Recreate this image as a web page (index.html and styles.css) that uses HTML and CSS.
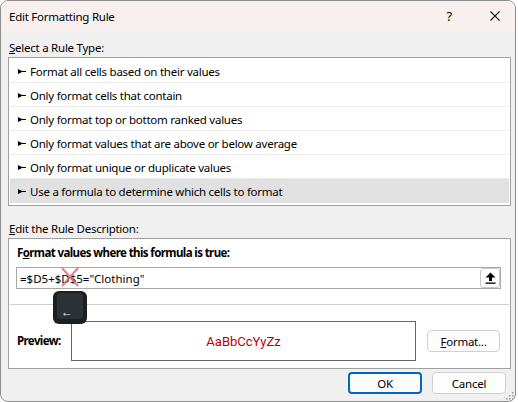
FILE: index.html
```html
<!DOCTYPE html>
<html lang="en">
<head>
    <meta charset="UTF-8">
    <title>Edit Formatting Rule</title>
    <link rel="stylesheet" href="styles.css">
</head>
<body>
    <div class="dialog">
        <div class="titlebar">
            <span class="title">Edit Formatting Rule</span>
            <span class="help">?</span>
            <svg class="close" width="10" height="10" viewBox="0 0 10 10"><path d="M0.5 0.5 L9.5 9.5 M9.5 0.5 L0.5 9.5" stroke="#1a1a1a" stroke-width="1.1" fill="none"/></svg>
        </div>

        <div class="content">
            <div class="label"><u>S</u>elect a Rule Type:</div>
            <ul class="rules">
                <li><svg class="marker" width="8" height="5" viewBox="0 0 8 5"><path d="M0 0 L4 2 L8 2 L8 3 L4 3 L0 5 Z" fill="#000"/></svg>Format all cells based on their values</li>
                <li><svg class="marker" width="8" height="5" viewBox="0 0 8 5"><path d="M0 0 L4 2 L8 2 L8 3 L4 3 L0 5 Z" fill="#000"/></svg>Only format cells that contain</li>
                <li><svg class="marker" width="8" height="5" viewBox="0 0 8 5"><path d="M0 0 L4 2 L8 2 L8 3 L4 3 L0 5 Z" fill="#000"/></svg>Only format top or bottom ranked values</li>
                <li><svg class="marker" width="8" height="5" viewBox="0 0 8 5"><path d="M0 0 L4 2 L8 2 L8 3 L4 3 L0 5 Z" fill="#000"/></svg>Only format values that are above or below average</li>
                <li><svg class="marker" width="8" height="5" viewBox="0 0 8 5"><path d="M0 0 L4 2 L8 2 L8 3 L4 3 L0 5 Z" fill="#000"/></svg>Only format unique or duplicate values</li>
                <li class="selected"><svg class="marker" width="8" height="5" viewBox="0 0 8 5"><path d="M0 0 L4 2 L8 2 L8 3 L4 3 L0 5 Z" fill="#000"/></svg>Use a formula to determine which cells to format</li>
            </ul>

            <div class="label desc-label"><u>E</u>dit the Rule Description:</div>
            <div class="desc">
                <div class="bold-label">F<u>o</u>rmat values where this formula is true:</div>
                <div class="formula">
                    <span class="formula-text">=$D5+$D$5="Clothing"</span>
                    <button class="collapse" type="button">
                        <svg width="11" height="12" viewBox="0 0 11 12"><path d="M5.5 0.5 L10.5 5.5 L7 5.5 L7 9 L4 9 L4 5.5 L0.5 5.5 Z" fill="#000"/><rect x="0.5" y="10.5" width="10" height="1.3" fill="#000"/></svg>
                    </button>
                </div>
                <div class="sep"></div>
                <div class="preview-row">
                    <span class="bold-label preview-label">Preview:</span>
                    <div class="preview">AaBbCcYyZz</div>
                    <button class="btn" type="button"><u>F</u>ormat...</button>
                </div>
            </div>
        </div>

        <div class="footer">
            <button class="btn primary" type="button">OK</button>
            <button class="btn" type="button">Cancel</button>
        </div>

        <!-- overlays -->
        <svg class="strike" width="20" height="22" viewBox="0 0 20 22"><path d="M2 2 L18 20 M18 2 L2 20" stroke="#e2677a" stroke-width="2" stroke-opacity="0.85" fill="none"/></svg>
        <div class="keycap"><div class="keycap-top"><span class="keycap-arrow">&#8592;</span></div></div>
        <svg class="grip" width="10" height="10" viewBox="0 0 10 10" fill="#9a9a9a"><rect x="7" y="1" width="1.5" height="1.5"/><rect x="4" y="4" width="1.5" height="1.5"/><rect x="7" y="4" width="1.5" height="1.5"/><rect x="1" y="7" width="1.5" height="1.5"/><rect x="4" y="7" width="1.5" height="1.5"/><rect x="7" y="7" width="1.5" height="1.5"/></svg>
    </div>
</body>
</html>
```

FILE: styles.css
```css
/* Cuadro de dialogo */
body {
    margin: 0;
    width: 518px;
    height: 402px;
    overflow: hidden;
    background: #ffffff;
    font-family: "Noto Sans", "Open Sans", sans-serif;
    font-size: 11.5px;
    letter-spacing: -0.25px;
    color: #000;
}

.dialog {
    position: relative;
    box-sizing: border-box;
    width: 516px;
    height: 402px;
    border: 1px solid #8e8e8e;
    border-radius: 8px;
    background: #f0f0f0;
    overflow: hidden;
}

.titlebar {
    display: flex;
    align-items: center;
    height: 30px;
    padding-left: 8px;
    background: #f7f0ef;
}

.title {
    flex: 1;
    padding-top: 1px;
}

.help {
    font-size: 13px;
    margin-right: 38px;
}

.close {
    margin-right: 15px;
}

.content {
    padding: 0 4px 0 7px;
}

.label {
    margin: 8px 0 1px 1px;
    line-height: 17px;
}

.desc-label {
    margin-top: 14px;
    margin-bottom: 1px;
}

.rules {
    list-style: none;
    margin: 0;
    padding: 1px 1px 2px;
    background: #fff;
    border: 1px solid #a0a0a0;
}

.rules li {
    display: flex;
    align-items: center;
    box-sizing: border-box;
    height: 24px;
    padding: 1px 0 0 8px;
    border-bottom: 1px solid #ececec;
}

.rules li.selected {
    background: #e1e1e1;
    border-bottom: none;
}

.marker {
    margin-right: 4px;
}

.desc {
    background: #fff;
    border: 1px solid #a0a0a0;
    padding: 6px 9px 7px 7px;
}

.bold-label {
    font-weight: bold;
    line-height: 16px;
    padding-left: 1px;
    letter-spacing: -0.6px;
}

.formula {
    display: flex;
    align-items: center;
    justify-content: space-between;
    box-sizing: border-box;
    height: 22px;
    margin: 6px 0 0 0;
    padding: 0 0 0 3px;
    border: 1px solid #a8a8a8;
}

.formula-text {
    padding-top: 1px;
    letter-spacing: 0;
}

.collapse {
    display: flex;
    align-items: center;
    justify-content: center;
    width: 20px;
    height: 20px;
    padding: 0;
    background: #fff;
    border: 1px solid #c8c8c8;
    border-radius: 3px;
}

.sep {
    height: 1px;
    margin: 15px -8px 0 -6px;
    background: #d0d0d0;
}

.preview-row {
    display: flex;
    align-items: center;
    margin-top: 16px;
}

.preview-label {
    width: 54px;
}

.preview {
    display: flex;
    align-items: center;
    justify-content: center;
    box-sizing: border-box;
    width: 345px;
    height: 40px;
    border: 1px solid #646464;
    color: #c00000;
    font-family: Roboto, sans-serif;
    font-size: 13px;
    letter-spacing: 0;
}

.btn {
    box-sizing: border-box;
    width: 73px;
    height: 22px;
    margin-left: 11px;
    padding: 0;
    font-family: inherit;
    font-size: 11.5px;
    letter-spacing: -0.25px;
    color: #000;
    background: #fdfdfd;
    border: 1px solid #d0d0d0;
    border-radius: 4px;
}

.footer {
    display: flex;
    justify-content: flex-end;
    gap: 10px;
    padding: 3px 9px 0 0;
}

.footer .btn {
    width: 74px;
    margin: 0;
}

.btn.primary {
    border: 2px solid #0067c0;
}

.strike {
    position: absolute;
    left: 59px;
    top: 265px;
}

.keycap {
    position: absolute;
    left: 52px;
    top: 290px;
    box-sizing: border-box;
    width: 34px;
    height: 33px;
    padding: 2px 4px 5px;
    background: #1d2023;
    border-radius: 6px;
}

.keycap-top {
    position: relative;
    height: 100%;
    background: #2b3135;
    border-radius: 4px;
}

.keycap-arrow {
    position: absolute;
    left: 4px;
    bottom: 1px;
    color: #f0f0f0;
    font-size: 12px;
    line-height: 12px;
}

.grip {
    position: absolute;
    right: 0;
    bottom: 0;
}
```
